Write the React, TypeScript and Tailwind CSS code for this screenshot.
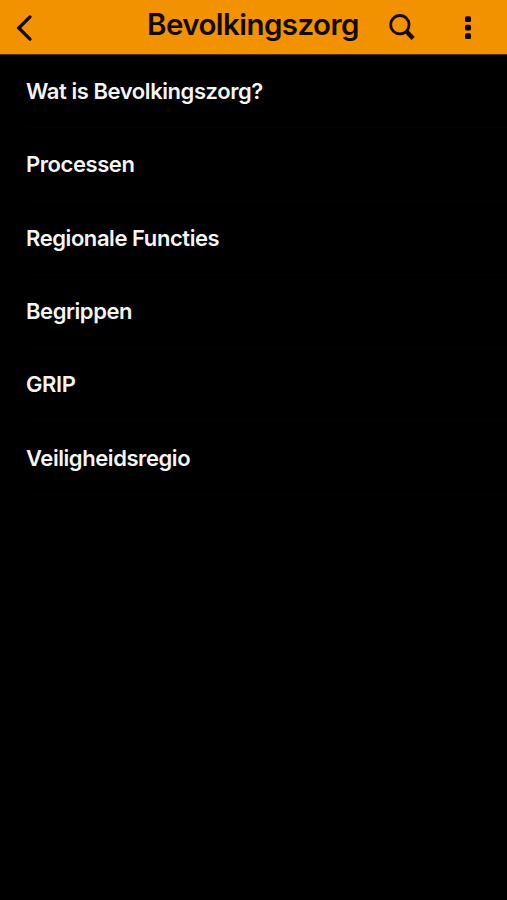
import React from "react";

const menuItems = [
  "Wat is Bevolkingszorg?",
  "Processen",
  "Regionale Functies",
  "Begrippen",
  "GRIP",
  "Veiligheidsregio",
];

function BackIcon() {
  return (
    <svg width="24" height="32" viewBox="0 0 24 32" fill="none">
      <path
        d="M18 4.9 6.8 16 18 27.1"
        stroke="currentColor"
        strokeWidth="3.3"
        strokeLinecap="round"
        strokeLinejoin="miter"
      />
    </svg>
  );
}

function SearchIcon() {
  return (
    <svg width="32" height="32" viewBox="0 0 32 32" fill="none">
      <circle cx="13.9" cy="12.7" r="9.2" stroke="currentColor" strokeWidth="2.8" />
      <path d="m19.6 18.6 7.5 8" stroke="currentColor" strokeWidth="4.4" />
    </svg>
  );
}

function MoreIcon() {
  return (
    <svg width="16" height="32" viewBox="0 0 16 32" fill="currentColor">
      <rect x="5" y="4.2" width="6" height="5.8" rx="1.5" />
      <rect x="5" y="12.7" width="6" height="5.8" rx="1.5" />
      <rect x="5" y="21.2" width="6" height="5.8" rx="1.5" />
    </svg>
  );
}

export default function App() {
  return (
    <div className="min-h-screen w-full bg-black font-['Inter',sans-serif]">
      {/* Header */}
      <header className="flex h-[55px] items-start border-b border-[#4a2c00] bg-[#f39200] pt-3 text-[#120a00]">
        <button className="ml-3" aria-label="Terug">
          <BackIcon />
        </button>
        <h1 className="-mt-1.5 ml-[111px] w-[213px] text-[29.5px] leading-9 font-semibold tracking-[-0.55px] whitespace-nowrap">
          Bevolkingszorg
        </h1>
        <button className="ml-[26px]" aria-label="Zoeken">
          <SearchIcon />
        </button>
        <button className="ml-[42px]" aria-label="Meer">
          <MoreIcon />
        </button>
      </header>

      {/* Menu */}
      <ul>
        {menuItems.map((item) => (
          <li key={item} className="h-[73.3px] pl-[26px]">
            <a className="flex h-full items-center border-b border-[#030303] pt-px text-[22px] font-semibold tracking-[-0.43px] text-[#f4f4f4]">
              {item}
            </a>
          </li>
        ))}
      </ul>
    </div>
  );
}
